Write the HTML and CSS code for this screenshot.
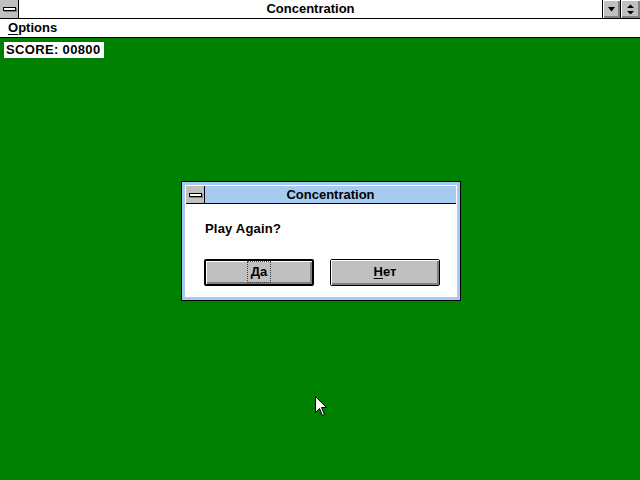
FILE: index.html
```html
<!DOCTYPE html>
<html>
<head>
<meta charset="utf-8">
<link rel="stylesheet" href="styles.css">
</head>
<body>
<div class="screen">
  <div class="titlebar">
    <div class="sysbox"><span class="sysbar"></span></div>
    <div class="title">Concentration</div>
    <div class="tbtn min">
      <svg width="9" height="5" viewBox="0 0 9 5"><polygon points="1,0 8,0 4.5,4.5" fill="#000"/></svg>
    </div>
    <div class="tbtn restore">
      <svg width="9" height="11" viewBox="0 0 9 11"><polygon points="4.5,0.5 8,4 1,4" fill="#000"/><polygon points="1,7 8,7 4.5,10.5" fill="#000"/></svg>
    </div>
  </div>
  <div class="menubar"><span class="menuitem"><u>O</u>ptions</span></div>
  <div class="desktop">
    <div class="score">SCORE: 00800</div>

    <div class="dialog">
      <div class="dialog-inner">
        <div class="caption">
          <div class="dsys"><span class="dsysbar"></span></div>
          <div class="ctitle">Concentration</div>
        </div>
        <div class="dbody">
          <div class="msg">Play Again?</div>
          <div class="buttons">
            <div class="btn default"><div class="bevel"><span class="focus"><u>Д</u>а</span></div></div>
            <div class="btn"><div class="bevel"><span class="label"><u>Н</u>ет</span></div></div>
          </div>
        </div>
      </div>
    </div>

    <svg class="cursor" width="13" height="21" viewBox="0 0 13 21">
      <polygon points="0.5,0.5 0.5,16.5 4.5,12.5 7.5,19.5 9.5,18.5 6.5,11.5 11.5,11.5" fill="#fff" stroke="#000" stroke-width="1"/>
    </svg>
  </div>
</div>
</body>
</html>
```

FILE: styles.css
```css
html, body {
  margin: 0;
  padding: 0;
}
body {
  width: 640px;
  height: 480px;
  overflow: hidden;
  font-family: "Liberation Sans", Arial, sans-serif;
  font-weight: bold;
  font-size: 13px;
  color: #000;
}
.screen {
  width: 640px;
  height: 480px;
  display: flex;
  flex-direction: column;
  background: #008000;
}
.titlebar {
  display: flex;
  height: 18px;
  background: #fff;
  border-bottom: 1px solid #000;
}
.sysbox {
  width: 18px;
  height: 18px;
  background: #c0c0c0;
  border-right: 1px solid #000;
  display: flex;
  align-items: center;
  justify-content: center;
}
.sysbar {
  display: block;
  width: 11px;
  height: 2px;
  background: #fff;
  border: 1px solid #000;
  box-shadow: 1px 1px 0 #808080;
  margin-top: -1px;
}
.title {
  flex: 1;
  text-align: center;
  line-height: 18px;
}
.tbtn {
  height: 18px;
  background: #c0c0c0;
  border-left: 1px solid #000;
  box-sizing: border-box;
  display: flex;
  align-items: center;
  justify-content: center;
  box-shadow: inset 1px 1px 0 #fff, inset -1px -1px 0 #808080, inset -2px -2px 0 #808080;
}
.tbtn.min { width: 18px; }
.tbtn.restore { width: 20px; }
.tbtn.min svg { margin-top: 1px; }
.menubar {
  height: 18px;
  background: #fff;
  border-bottom: 1px solid #000;
  display: flex;
  align-items: center;
}
.menuitem {
  margin-left: 8px;
  line-height: 18px;
}
.menuitem u {
  text-underline-offset: 2px;
}
.desktop {
  flex: 1;
  position: relative;
  padding: 4px 0 0 4px;
}
.score {
  display: inline-block;
  background: #fff;
  height: 16px;
  width: 96px;
  line-height: 16px;
  padding-left: 2px;
  padding-right: 2px;
  letter-spacing: 0.35px;
}
.dialog {
  position: absolute;
  left: 181px;
  top: 143px;
  width: 280px;
  height: 120px;
  box-sizing: border-box;
  border: 1px solid #000;
  background: #a6caf0;
  padding: 3px;
}
.dialog-inner {
  background: #fff;
  height: 100%;
  box-sizing: border-box;
  padding: 1px;
  display: flex;
  flex-direction: column;
}
.caption {
  display: flex;
  height: 17px;
  background: #a6caf0;
  border-bottom: 1px solid #000;
}
.dsys {
  width: 18px;
  background: #c0c0c0;
  border-right: 1px solid #000;
  display: flex;
  align-items: center;
  justify-content: center;
}
.dsysbar {
  display: block;
  width: 11px;
  height: 2px;
  background: #fff;
  border: 1px solid #000;
  box-shadow: 1px 1px 0 #808080;
}
.ctitle {
  flex: 1;
  text-align: center;
  line-height: 17px;
}
.dbody {
  flex: 1;
  padding: 17px 0 0 18px;
}
.msg {
  line-height: 16px;
  padding-left: 1px;
  letter-spacing: 0.2px;
}
.buttons {
  display: flex;
  gap: 16px;
  margin-top: 22px;
}
.btn {
  width: 110px;
  height: 27px;
  box-sizing: border-box;
  border: 1px solid #000;
  border-radius: 2px;
  background: #c0c0c0;
}
.btn.default {
  border-width: 2px;
}
.bevel {
  height: 100%;
  box-sizing: border-box;
  display: flex;
  align-items: center;
  justify-content: center;
  box-shadow: inset 1px 1px 0 #fff, inset -1px -1px 0 #808080, inset -2px -2px 0 #808080;
}
.focus {
  outline: 1px dotted #404040;
  padding: 2px 3px;
  line-height: 16px;
  margin-top: -1px;
}
.label {
  line-height: 16px;
  margin-top: -1px;
}
.bevel u {
  text-underline-offset: 2px;
}
.cursor {
  position: absolute;
  left: 315px;
  top: 358px;
}
```
